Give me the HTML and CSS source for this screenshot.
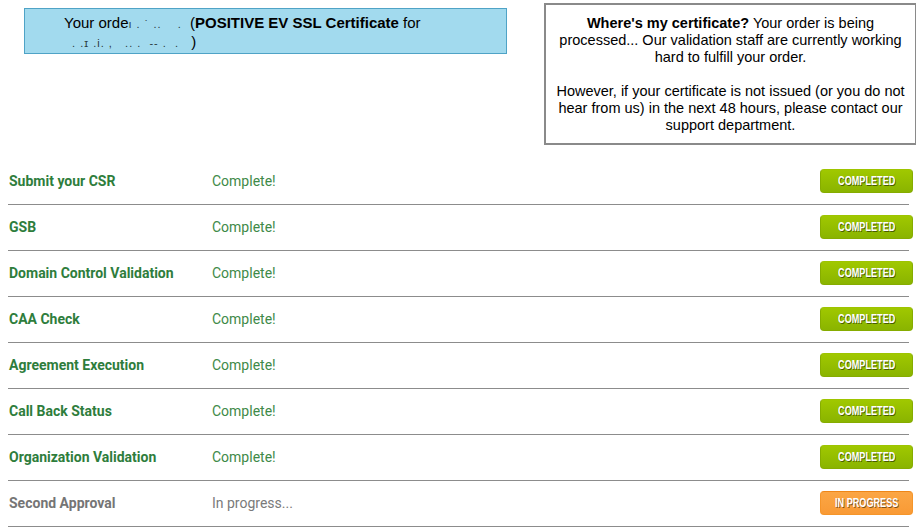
FILE: index.html
```html
<!DOCTYPE html>
<html lang="en">

<head>
    <meta charset="UTF-8">
    <title>Order Status</title>
    <link rel="stylesheet" href="styles.css">
</head>

<body>
    <div class="top">
        <div class="order-box">
            <p>Your orde<span class="masked">ı . ˙ ..&nbsp;&nbsp;&nbsp;&nbsp;.&nbsp;&nbsp;</span>(<b>POSITIVE EV SSL Certificate</b> for<br>
                <span class="masked">&nbsp;&nbsp;. .ɪ .i. ,&nbsp;&nbsp;&nbsp;.. .&nbsp;&nbsp;-- .&nbsp;&nbsp;.&nbsp;&nbsp;&nbsp;</span>)</p>
        </div>
        <div class="info-box">
            <p><b>Where's my certificate?</b> Your order is being processed... Our validation staff are currently working hard to fulfill your order.</p>
            <p>However, if your certificate is not issued (or you do not hear from us) in the next 48 hours, please contact our support department.</p>
        </div>
    </div>

    <div class="steps">
        <div class="step done">
            <div class="step-name">Submit your CSR</div>
            <div class="step-status">Complete!</div>
            <span class="badge green"><span>COMPLETED</span></span>
        </div>
        <div class="step done">
            <div class="step-name">GSB</div>
            <div class="step-status">Complete!</div>
            <span class="badge green"><span>COMPLETED</span></span>
        </div>
        <div class="step done">
            <div class="step-name">Domain Control Validation</div>
            <div class="step-status">Complete!</div>
            <span class="badge green"><span>COMPLETED</span></span>
        </div>
        <div class="step done">
            <div class="step-name">CAA Check</div>
            <div class="step-status">Complete!</div>
            <span class="badge green"><span>COMPLETED</span></span>
        </div>
        <div class="step done">
            <div class="step-name">Agreement Execution</div>
            <div class="step-status">Complete!</div>
            <span class="badge green"><span>COMPLETED</span></span>
        </div>
        <div class="step done">
            <div class="step-name">Call Back Status</div>
            <div class="step-status">Complete!</div>
            <span class="badge green"><span>COMPLETED</span></span>
        </div>
        <div class="step done">
            <div class="step-name">Organization Validation</div>
            <div class="step-status">Complete!</div>
            <span class="badge green"><span>COMPLETED</span></span>
        </div>
        <div class="step pending">
            <div class="step-name">Second Approval</div>
            <div class="step-status">In progress...</div>
            <span class="badge orange"><span>IN PROGRESS</span></span>
        </div>
    </div>
</body>

</html>
```

FILE: styles.css
```css
body {
    margin: 0;
    padding: 3px 2px 0 8px;
    background: #fff;
    font-family: "Liberation Sans", Arial, sans-serif;
    color: #000;
}

.top {
    display: flex;
    align-items: flex-start;
    justify-content: space-between;
    height: 156px;
}

.order-box {
    margin: 5px 0 0 16px;
    width: 481px;
    height: 44px;
    background: #a2daee;
    border: 1px solid #4fa3c6;
    font-size: 15px;
    line-height: 17px;
}

.order-box p {
    margin: 5px 0 0 39px;
}

.masked {
    color: #2a3a40;
    font-size: 11px;
    letter-spacing: 1px;
}

.info-box {
    width: 369px;
    height: 138px;
    border: 2px solid #8a8a8a;
    border-right-width: 1px;
    text-align: center;
    font-size: 14.5px;
    line-height: 17px;
}

.info-box p {
    margin: 10px 4px 0;
}

.info-box p + p {
    margin-top: 17px;
}

.steps {
    width: 901px;
}

.step {
    display: flex;
    align-items: center;
    height: 43px;
    padding-bottom: 2px;
    border-bottom: 1px solid #8c8c8c;
    font-family: Roboto, "Liberation Sans", sans-serif;
    font-size: 14px;
}

.step-name {
    width: 203px;
    padding-left: 1px;
    font-weight: bold;
}

.step-status {
    flex: 1;
}

.done .step-name {
    color: #2e7d3c;
}

.done .step-status {
    color: #3e8a48;
}

.pending .step-name {
    color: #757575;
}

.pending .step-status {
    color: #7a7a7a;
}

.badge {
    width: 93px;
    height: 24px;
    margin-right: -4px;
    box-sizing: border-box;
    border-radius: 4px;
    color: #fff;
    font-family: "Liberation Sans", Arial, sans-serif;
    font-weight: bold;
    font-size: 12px;
    line-height: 22px;
    text-align: center;
    text-shadow: 1px 1px 0 rgba(0, 0, 0, 0.5);
}

.badge span {
    display: inline-block;
    transform: scaleX(0.76);
}

.green {
    background: linear-gradient(#a0c800, #8ab400);
    border: 1px solid #86ac00;
    border-top-color: #9ec400;
}

.orange {
    background: linear-gradient(#fba645, #f99a35);
    border: 1px solid #f5952a;
    border-top-color: #ee8618;
}
```
